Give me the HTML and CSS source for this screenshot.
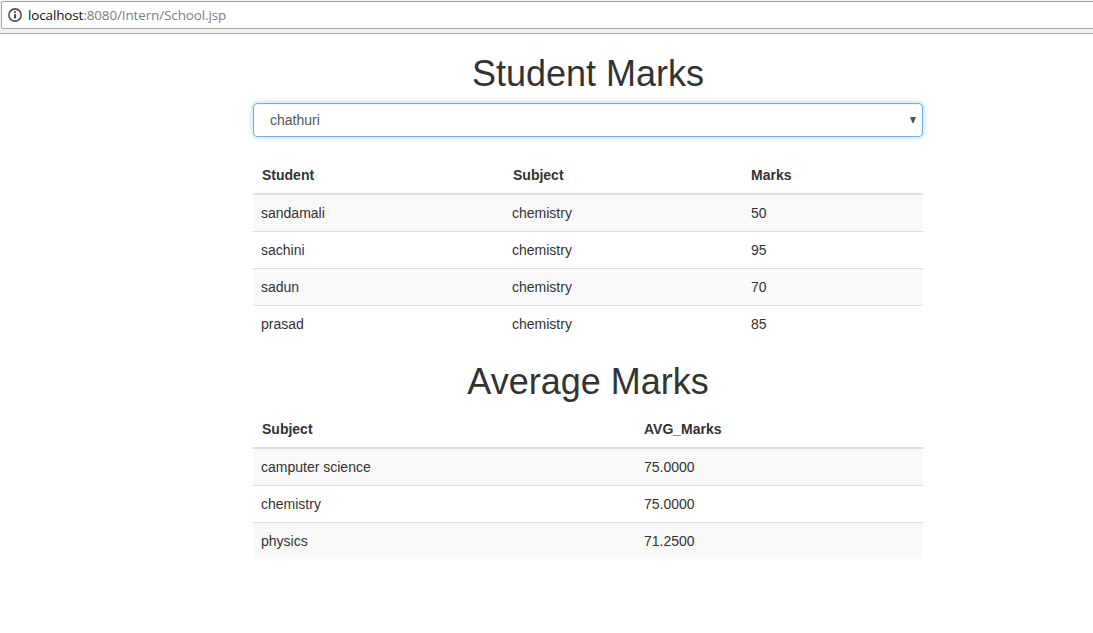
FILE: index.html
```html
<!DOCTYPE html>
<html lang="en">
<head>
<meta charset="utf-8">
<title>Student Marks</title>
<link rel="stylesheet" href="styles.css">
</head>
<body>
<header class="toolbar">
  <div class="address">
    <svg class="info" viewBox="0 0 14 14" width="14" height="14"><circle cx="7" cy="7" r="6.1" fill="none" stroke="#505050" stroke-width="1.6"/><path d="M7 6v4.6M7 3.2v1.9" stroke="#505050" stroke-width="2"/></svg>
    <span class="url"><span class="host">localhost</span>:8080/Intern/School.jsp</span>
  </div>
</header>
<main class="container">
  <h1 class="title">Student Marks</h1>
  <div class="select"><span>chathuri</span><svg class="arrow" viewBox="0 0 6 6" width="6" height="6"><path d="M0 0h6L3.5 6h-1z" fill="#505050"/></svg></div>
  <table class="table students">
    <colgroup><col class="c1"><col class="c2"><col></colgroup>
    <thead><tr><th>Student</th><th>Subject</th><th class="flush">Marks</th></tr></thead>
    <tbody>
      <tr><td>sandamali</td><td>chemistry</td><td>50</td></tr>
      <tr><td>sachini</td><td>chemistry</td><td>95</td></tr>
      <tr><td>sadun</td><td>chemistry</td><td>70</td></tr>
      <tr><td>prasad</td><td>chemistry</td><td>85</td></tr>
    </tbody>
  </table>
  <h1 class="title">Average Marks</h1>
  <table class="table averages">
    <colgroup><col class="c3"><col></colgroup>
    <thead><tr><th>Subject</th><th class="flush">AVG_Marks</th></tr></thead>
    <tbody>
      <tr><td>camputer science</td><td>75.0000</td></tr>
      <tr><td>chemistry</td><td>75.0000</td></tr>
      <tr><td>physics</td><td>71.2500</td></tr>
    </tbody>
  </table>
</main>
</body>
</html>
```
FILE: styles.css
```css
* { box-sizing: border-box; }
body { margin: 0; background: #fff; color: #333; font: 14px/20px "Liberation Sans", Arial, sans-serif; }
.toolbar { height: 34px; background: #f2f2f2; border-bottom: 1px solid #b6b4b6; padding-top: 1px; }
.address { display: flex; align-items: center; height: 28px; margin-left: 1px; padding-left: 6px; background: #fff; border: 1px solid #a8a8a8; border-right: 0; border-radius: 2px 0 0 2px; }
.url { margin-left: 6px; font: 13.5px/20px "Open Sans", sans-serif; letter-spacing: -0.14px; color: #808080; white-space: nowrap; }
.host { color: #111; }
.container { width: 670px; margin-left: 253px; }
.title { margin: 20px 0 10px; font-size: 36px; line-height: 39px; font-weight: 400; text-align: center; }
.select { display: flex; align-items: center; justify-content: space-between; height: 34px; padding: 0 6px 0 16px; border: 1px solid #66afe9; border-radius: 4px; color: #555; box-shadow: inset 0 1px 1px rgba(0,0,0,.05), 0 0 6px rgba(102,175,233,.5); }
.table { width: 100%; border-collapse: collapse; table-layout: fixed; }
.students { margin-top: 20px; }
.c1 { width: 251px; }
.c2 { width: 239px; }
.c3 { width: 383px; }
th, td { padding: 8px; text-align: left; }
th { padding-left: 9px; border-bottom: 2px solid #ddd; }
th.flush { padding-left: 8px; }
td { border-top: 1px solid #ddd; }
tbody tr:nth-child(odd) { background: #f9f9f9; }
```
